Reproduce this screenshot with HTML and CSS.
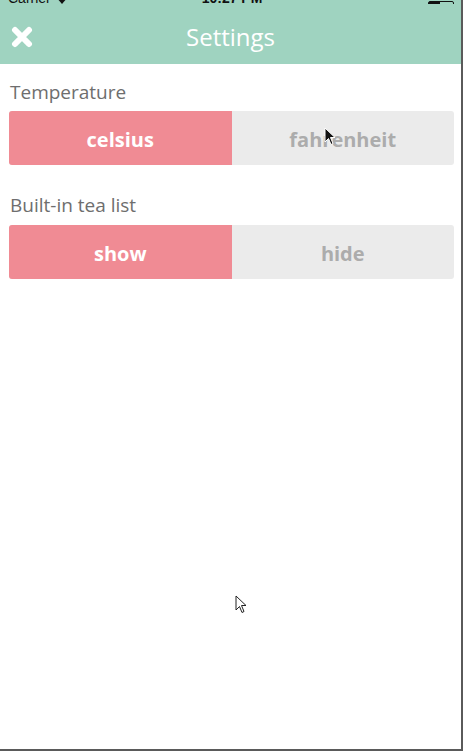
FILE: index.html
```html
<!DOCTYPE html>
<html lang="en">
<head>
<meta charset="utf-8">
<title>Settings</title>
<link rel="stylesheet" href="styles.css">
</head>
<body>
<div class="frame">
  <header class="top">
    <div class="status">
      <span class="carrier">Carrier <svg class="wifi" width="12" height="9" viewBox="0 0 12 9"><path d="M6 9 L0 2 Q6 -2 12 2 Z" fill="#111"/></svg></span>
      <span class="time">10:27 PM</span>
      <span class="battery"><span class="level"></span></span>
    </div>
    <div class="nav">
      <button class="close" aria-label="Close">
        <svg width="22" height="22" viewBox="0 0 22 22"><path d="M4 4 L18 18 M18 4 L4 18" stroke="#fff" stroke-width="6" stroke-linecap="round"/></svg>
      </button>
      <h1 class="title">Settings</h1>
      <span class="spacer"></span>
    </div>
  </header>
  <main class="content">
    <section class="setting">
      <div class="label">Temperature</div>
      <div class="seg">
        <div class="opt on">celsius</div>
        <div class="opt">fahrenheit</div>
      </div>
    </section>
    <section class="setting">
      <div class="label">Built-in tea list</div>
      <div class="seg">
        <div class="opt on">show</div>
        <div class="opt">hide</div>
      </div>
    </section>
  </main>
  <svg class="cursor cursor-a" width="12" height="19" viewBox="0 0 12 19"><path d="M1 1 L1 15 L4.5 11.5 L7 17.5 L9 16.5 L6.5 10.5 L11 10.5 Z" fill="#111" stroke="#fff" stroke-width="1"/></svg>
  <svg class="cursor cursor-b" width="12" height="19" viewBox="0 0 12 19"><path d="M1 1 L1 15 L4.5 11.5 L7 17.5 L9 16.5 L6.5 10.5 L11 10.5 Z" fill="#fff" stroke="#222" stroke-width="1"/></svg>
</div>
</body>
</html>
```

FILE: styles.css
```css
html, body {
  margin: 0;
  padding: 0;
  background: #fff;
}
body {
  font-family: "Open Sans", "Noto Sans", sans-serif;
}
.frame {
  position: relative;
  width: 461px;
  height: 749px;
  border-right: 2px solid #5a5a5a;
  border-bottom: 2px solid #5a5a5a;
  background: #fff;
  overflow: hidden;
}
.top {
  background: #9fd3c0;
  display: flex;
  flex-direction: column;
}
.status {
  height: 4px;
  overflow: hidden;
  display: flex;
  align-items: flex-end;
  justify-content: space-between;
  padding: 0 7px 0 8px;
  font-family: "Liberation Sans", Arial, sans-serif;
  font-size: 14px;
  line-height: 11px;
  color: #111;
}
.carrier {
  display: flex;
  align-items: flex-end;
  gap: 5px;
  width: 120px;
}
.time {
  font-weight: bold;
  font-size: 14px;
}
.battery {
  width: 26px;
  height: 11px;
  border: 1px solid #111;
  border-radius: 2px;
  box-sizing: border-box;
  display: flex;
  margin-left: 92px;
  margin-bottom: -8px;
}
.battery .level {
  width: 11px;
  background: #111;
}
.nav {
  height: 60px;
  display: grid;
  grid-template-columns: 1fr auto 1fr;
  align-items: center;
  padding-top: 6px;
  box-sizing: border-box;
}
.close {
  justify-self: start;
  background: none;
  border: 0;
  padding: 0;
  margin-left: 11px;
  width: 22px;
  height: 22px;
  display: flex;
}
.title {
  margin: 0;
  font-size: 24px;
  font-weight: 400;
  color: #fff;
  line-height: 32px;
}
.content {
  padding: 15px 7px 0 9px;
  display: flex;
  flex-direction: column;
  gap: 27px;
}
.setting {
  display: flex;
  flex-direction: column;
  gap: 6px;
}
.setting + .setting {
  gap: 7px;
}
.label {
  font-size: 19px;
  color: #6e6e6e;
  padding-left: 1px;
  line-height: 26px;
}
.seg {
  display: grid;
  grid-template-columns: 1fr 1fr;
  height: 54px;
  border-radius: 3px;
  overflow: hidden;
  background: #ebebeb;
}
.opt {
  display: flex;
  align-items: center;
  justify-content: center;
  font-size: 20px;
  font-weight: 700;
  color: #acacac;
  padding-top: 2px;
}
.opt.on {
  background: #f08b94;
  color: #fff;
}
.cursor {
  position: absolute;
}
.cursor-a {
  left: 324px;
  top: 127px;
}
.cursor-b {
  left: 235px;
  top: 595px;
}
```
